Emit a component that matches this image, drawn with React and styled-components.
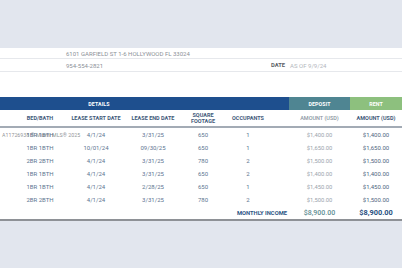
import React from 'react';
import styled, { createGlobalStyle } from 'styled-components';

const GlobalStyle = createGlobalStyle`
  html, body {
    margin: 0;
    padding: 0;
    background: #e2e6ee;
    font-family: Roboto, "Liberation Sans", sans-serif;
  }
`;

const Page = styled.div`
  width: 402px;
  height: 268px;
  overflow: hidden;
  background: #e2e6ee;
`;

const TopBand = styled.div`
  height: 48px;
`;

const Sheet = styled.div`
  position: relative;
  background: #fff;
  border-bottom: 2px solid #8e9196;
`;

const InfoRow = styled.div`
  display: flex;
  align-items: center;
  height: ${(p) => p.$h}px;
  padding-left: 66px;
  border-bottom: 1px solid #e6e8ec;
  font-size: 6px;
  color: #8c9198;
`;

const DateGroup = styled.div`
  margin-left: auto;
  width: 131px;
  display: flex;
  gap: 5px;
`;

const DateLabel = styled.span`
  font-weight: 700;
  color: #5b5f66;
  font-size: 5.8px;
`;

const DateValue = styled.span`
  color: #b3b7bd;
`;

const Table = styled.div`
  margin-top: 25px;
  display: grid;
  grid-template-columns: 68px 56px 58px 42px 48px 17px 61px 52px;
`;

const BandCell = styled.div`
  grid-column: ${(p) => p.$span};
  height: 13px;
  display: flex;
  align-items: center;
  justify-content: center;
  padding-right: ${(p) => p.$pr || 0}px;
  background: ${(p) => p.$bg};
  color: #fff;
  font-size: 5.3px;
  font-weight: 700;
  letter-spacing: 0.1px;
`;

const HeadCell = styled.div`
  height: 16px;
  display: flex;
  align-items: center;
  justify-content: center;
  text-align: center;
  padding-left: ${(p) => p.$pl || 0}px;
  border-bottom: 2px solid #a3abb5;
  color: ${(p) => (p.$light ? '#8a95a1' : '#3f5a7a')};
  font-size: 5.5px;
  font-weight: ${(p) => (p.$light ? 500 : 700)};
  line-height: 1.15;
`;

const Cell = styled.div`
  height: 13px;
  display: flex;
  align-items: center;
  justify-content: center;
  padding-left: ${(p) => p.$pl || 0}px;
  color: ${(p) => (p.$tone === 'deposit' ? '#9aa3ac' : p.$tone === 'rent' ? '#4f6680' : '#5d7591')};
  font-size: ${(p) => (p.$tone === 'deposit' ? 5.8 : 6)}px;
  font-weight: 400;
`;

const TotalLabel = styled.div`
  grid-column: 1 / 7;
  height: 13px;
  display: flex;
  align-items: center;
  justify-content: flex-end;
  padding-right: 2px;
  color: #2d5584;
  font-size: 5.8px;
  font-weight: 700;
`;

const TotalCell = styled.div`
  height: 13px;
  display: flex;
  align-items: center;
  justify-content: center;
  color: ${(p) => (p.$rent ? '#28507f' : '#5f8e93')};
  font-size: ${(p) => (p.$rent ? 7.4 : 7)}px;
  font-weight: ${(p) => (p.$rent ? 700 : 500)};
`;

const Watermark = styled.div`
  position: absolute;
  left: 2px;
  top: 84px;
  color: rgba(120, 125, 130, 0.85);
  font-size: 5.3px;
  pointer-events: none;
`;

const rows = [
  ['1BR 1BTH', '4/1/24', '3/31/25', '650', '1', '$1,400.00', '$1,400.00'],
  ['1BR 1BTH', '10/01/24', '09/30/25', '650', '1', '$1,650.00', '$1,650.00'],
  ['2BR 2BTH', '4/1/24', '3/31/25', '780', '2', '$1,500.00', '$1,500.00'],
  ['1BR 1BTH', '4/1/24', '3/31/25', '650', '2', '$1,400.00', '$1,400.00'],
  ['1BR 1BTH', '4/1/24', '2/28/25', '650', '1', '$1,450.00', '$1,450.00'],
  ['2BR 2BTH', '4/1/24', '3/31/25', '780', '2', '$1,500.00', '$1,500.00'],
];

const App = () => {
  return (
    <Page>
      <GlobalStyle />
      <TopBand />
      <Sheet>
        <InfoRow $h={10}>6101 GARFIELD ST 1-6 HOLLYWOOD FL 33024</InfoRow>
        <InfoRow $h={12}>
          954-554-2821
          <DateGroup>
            <DateLabel>DATE</DateLabel>
            <DateValue>AS OF 9/9/24</DateValue>
          </DateGroup>
        </InfoRow>

        <Table>
          <BandCell $span="1 / 7" $bg="#1e4f8e" $pr={91}>DETAILS</BandCell>
          <BandCell $span="7 / 8" $bg="#4f8592">DEPOSIT</BandCell>
          <BandCell $span="8 / 9" $bg="#8dc07e">RENT</BandCell>

          <HeadCell $pl={12}>BED/BATH</HeadCell>
          <HeadCell>LEASE START DATE</HeadCell>
          <HeadCell>LEASE END DATE</HeadCell>
          <HeadCell>SQUARE<br />FOOTAGE</HeadCell>
          <HeadCell>OCCUPANTS</HeadCell>
          <HeadCell />
          <HeadCell $light>AMOUNT (USD)</HeadCell>
          <HeadCell>AMOUNT (USD)</HeadCell>

          {rows.map((r, i) => (
            <React.Fragment key={i}>
              <Cell $pl={12}>{r[0]}</Cell>
              <Cell>{r[1]}</Cell>
              <Cell>{r[2]}</Cell>
              <Cell>{r[3]}</Cell>
              <Cell>{r[4]}</Cell>
              <Cell />
              <Cell $tone="deposit">{r[5]}</Cell>
              <Cell $tone="rent">{r[6]}</Cell>
            </React.Fragment>
          ))}

          <TotalLabel>MONTHLY INCOME</TotalLabel>
          <TotalCell>$8,900.00</TotalCell>
          <TotalCell $rent>$8,900.00</TotalCell>
        </Table>

        <Watermark>A11726938 © Miami MLS® 2025</Watermark>
      </Sheet>
    </Page>
  );
};

export default App;
